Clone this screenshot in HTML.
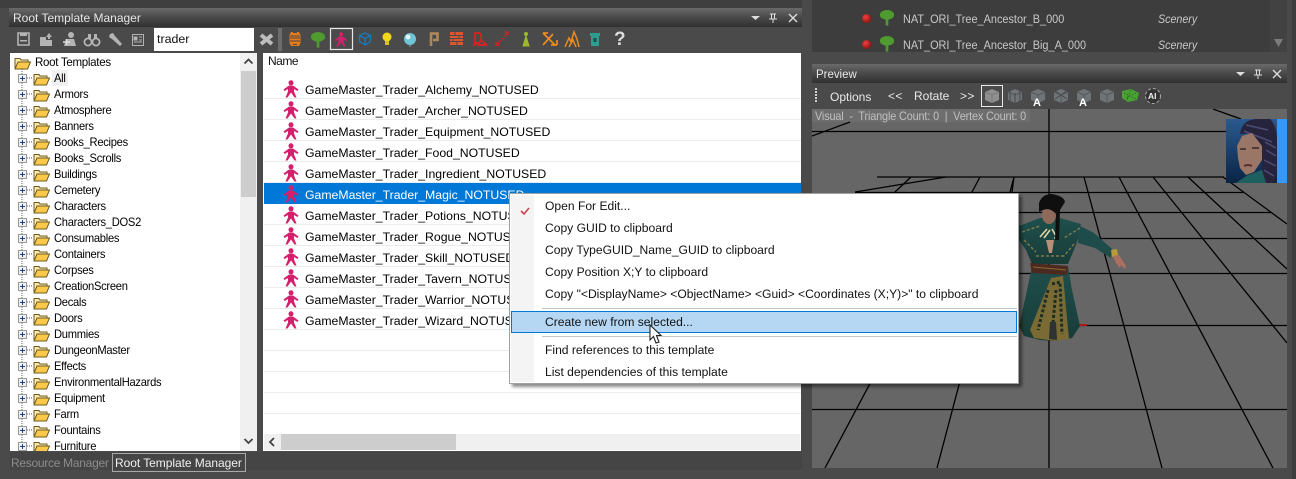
<!DOCTYPE html>
<html><head><meta charset="utf-8"><style>
html,body{margin:0;padding:0}
body{width:1296px;height:479px;overflow:hidden;background:#4a4a4a;position:relative;font:12px/16px "Liberation Sans",sans-serif;color:#000}
.a{position:absolute}
.s{position:absolute;white-space:pre;transform-origin:0 50%}
.tb{position:absolute;height:19px;background:linear-gradient(#6a6a6a,#4c4c4c 45%,#303030)}
.tree{position:absolute;left:54px;line-height:16px;font-size:12px;letter-spacing:-.3px;white-space:pre;transform:scaleX(.93);transform-origin:0 0}
.lst{position:absolute;left:305px;top:80px;line-height:21px;font-size:12.25px;white-space:pre}
.m{position:absolute;left:545px;white-space:pre;font-size:12.1px;line-height:16px;color:#111}
</style></head><body>
<svg width="0" height="0" style="position:absolute"><defs>
<symbol id="p" viewBox="0 0 18 18"><path d="M7 5.500H11L16.500 9.500L15.500 11L12 9L12 11.500L14.500 17.500H12.500L9 12.500L5.500 17.500H3.500L6 11.500L6 9L2.500 11L1.500 9.500Z" fill="#d3206c"/><circle cx="9" cy="2.800" r="2.500" fill="#d3206c"/></symbol>
<symbol id="f" viewBox="0 0 17 14"><path d="M1 12V2.500H6L7 4H14V6" fill="#fbe9a8" stroke="#6d5a22"/><path d="M1 13L4 6H16.500L13.500 13Z" fill="#fcc94a" stroke="#6d5a22"/></symbol>
<symbol id="b" viewBox="0 0 9 9"><rect x=".5" y=".5" width="8" height="8" fill="#f2f2f2" stroke="#9a9a9a"/><path d="M2 4.500H7M4.500 2V7" stroke="#1f3f8f"/></symbol>
<symbol id="tr" viewBox="0 0 18 18"><ellipse cx="9" cy="6" rx="8" ry="5.500" fill="#4f9b30"/><rect x="7.500" y="9" width="3" height="9" fill="#4f9b30"/></symbol>
<symbol id="cb" viewBox="0 0 18 18"><path d="M9 2L16 5V13L9 16L2 13V5Z" fill="#6f7477"/><path d="M2 5L9 8L16 5M9 8V16" stroke="#54585b" fill="none"/></symbol>
</defs></svg>

<!-- Top bars -->
<div class="a" style="left:0;top:0;width:802px;height:8px;background:#3f3f3f"></div>
<div class="tb" style="left:9px;top:8px;width:793px"></div>
<div class="s" style="left:13px;top:10px;color:#e6e6e6;font-size:12px">Root Template Manager</div>
<svg class="a" style="left:745px;top:8px" width="57" height="19" fill="none" stroke="#ddd"><path d="M6 8H15L10.500 12Z" fill="#ddd" stroke="none"/><path d="M25 6H31M26.500 6V11M29.500 6V11M24 11H32M28 11V15" /><path d="M44 6L52 14M52 6L44 14" stroke-width="1.400"/></svg>

<!-- left toolbar -->
<svg class="a" style="left:0;top:27px" width="154" height="25" fill="#b4b4b4">
<path d="M18 6H29V18H18Z" fill="none" stroke="#b4b4b4" stroke-width="1.600"/><rect x="20" y="6" width="7" height="3"/><rect x="20" y="13" width="7" height="1.500"/>
<path d="M40 10H46V13H52V19H40Z"/><path d="M46 10L49 6L52 10H50V12H48V10Z"/>
<circle cx="71" cy="8" r="3"/><path d="M64 19L66 12H74L76 19Z"/><path d="M63 15H70M66.500 12V18" stroke="#ddd" stroke-width="1.500"/>
<circle cx="88" cy="15" r="3.600" fill="none" stroke="#b4b4b4" stroke-width="1.800"/><circle cx="96" cy="15" r="3.600" fill="none" stroke="#b4b4b4" stroke-width="1.800"/><path d="M88 7H91V12H88ZM94 7H97V12H94Z"/>
<path d="M110 7L113 6L115 9L122 17L120 19L112 12L109 10Z"/>
<rect x="132.500" y="7.500" width="11" height="11" fill="none" stroke="#b4b4b4"/><path d="M134 10H137V13H134ZM139 10H142M139 13H142M134 15H142" stroke="#b4b4b4"/>
</svg>
<div class="a" style="left:154px;top:28px;width:100px;height:23px;background:#fff"></div>
<div class="s" style="left:157px;top:31px;font-size:12.4px;color:#111">trader</div>
<svg class="a" style="left:258px;top:32px" width="18" height="15"><path d="M3 3L14 12M14 3L3 12" stroke="#bdbdbd" stroke-width="4"/></svg>
<div class="a" style="left:278px;top:28px;width:4px;height:23px;background:#6c6c6c"></div>

<!-- filter toolbar -->
<svg class="a" style="left:285px;top:27px" width="350" height="25" fill="none">
<path d="M6 5H14L15.500 8V16L14 19H6L4.500 16V8Z" fill="#e87b18"/><path d="M5 9H15M5 11H15M5 14H15M8 5.500H12M8 17.500H12" stroke="#4a4a4a"/>
<use href="#tr" x="25" y="4" width="16" height="17"/>
<rect x="45.500" y="1.500" width="22" height="21" stroke="#e8e8e8" stroke-width="1.200"/>
<use href="#p" x="48" y="5" width="16" height="15"/>
<path d="M80 6L85.500 8.500V14.500L80 18L74.500 14.500V8.500ZM74.500 8.500L80 11.500L85.500 8.500M80 11.500V18" stroke="#1a7ab8" stroke-width="1.300"/>
<circle cx="102" cy="10" r="4.500" fill="#f0d81c"/><rect x="100" y="14" width="4" height="4" fill="#d8c218"/>
<circle cx="125" cy="12" r="6" fill="#6fc4d8"/><circle cx="123" cy="10" r="2.400" fill="#e4f7fb"/><path d="M125 18V20" stroke="#8aa"/>
<path d="M146 19V6.500H152.500V13H148" stroke="#b08a56" stroke-width="2.600"/>
<rect x="165" y="5" width="13" height="13" fill="#e2552a"/><path d="M165 8.500H178M165 11.500H178M165 14.500H178M170 5V8.500M174 8.500V11.500M168 11.500V14.500M172 14.500V18" stroke="#4a4a4a"/>
<path d="M190 6H194C197 6 197 14 194 16H190ZM190 6V16M188 19L192 16M202 18H192M202 18L197 14" stroke="#e02020" stroke-width="1.700"/>
<path d="M211 18.500H213.500V16H211ZM220.500 7.500H223V5H220.500Z" stroke="#d82020" stroke-width="1.300"/><path d="M214 15L217 12L219.500 11L220.500 8.500" stroke="#d82020" stroke-width="1.300" stroke-dasharray="2.500 1.500"/>
<circle cx="241" cy="7" r="2" fill="#9bbb2c"/><path d="M241 9L238 19H244Z" fill="#9bbb2c" stroke="#9bbb2c"/>
<path d="M258 6L270 18M258 18L268 7M258 6H263M266 18H272M272 18V13" stroke="#ef8a1c" stroke-width="1.700"/>
<path d="M280 20L284 11L286 15L289 5L292 12L294 20M284 20L288 13L291 20" stroke="#ef8a1c" stroke-width="1.500"/>
<path d="M305 6H315V9H314V19H306V9H305Z" fill="#2e9c8e"/><rect x="308.500" y="11" width="3" height="4" fill="#1f4d48"/>
</svg>
<div class="s" style="left:614px;top:28px;font:bold 19px/24px 'Liberation Sans',sans-serif;color:#dcdcdc">?</div>

<!-- tree panel -->
<div class="a" style="left:10px;top:53px;width:247px;height:398px;background:#fff;overflow:hidden">
<div class="a" style="left:230px;top:0;width:17px;height:398px;background:#f0f0f0"></div>
<div class="a" style="left:231px;top:18px;width:15px;height:126px;background:#cdcdcd"></div>
<svg class="a" style="left:230px;top:0" width="17" height="398" fill="none" stroke="#444" stroke-width="1.800"><path d="M4.500 10.500L8.500 6.500L12.500 10.500M4.500 386L8.500 390L12.500 386"/></svg>
<svg class="a" style="left:0;top:0" width="230" height="398">
<path d="M12 16V398" stroke="#666" stroke-dasharray="1 1"/>
<path d="M17 25H23M17 41H23M17 57H23M17 73H23M17 89H23M17 105H23M17 121H23M17 137H23M17 153H23M17 169H23M17 185H23M17 201H23M17 217H23M17 233H23M17 249H23M17 265H23M17 281H23M17 297H23M17 313H23M17 329H23M17 345H23M17 361H23M17 377H23M17 393H23" stroke="#666" stroke-dasharray="1 1"/>
<use href="#f" x="4" y="3" width="17" height="14"/>
<g id="r0"><use href="#b" x="8" y="21" width="9" height="9"/><use href="#f" x="23" y="19" width="17" height="14"/></g>
<use href="#b" x="8" y="37" width="9" height="9"/><use href="#f" x="23" y="35" width="17" height="14"/>
<use href="#b" x="8" y="53" width="9" height="9"/><use href="#f" x="23" y="51" width="17" height="14"/>
<use href="#b" x="8" y="69" width="9" height="9"/><use href="#f" x="23" y="67" width="17" height="14"/>
<use href="#b" x="8" y="85" width="9" height="9"/><use href="#f" x="23" y="83" width="17" height="14"/>
<use href="#b" x="8" y="101" width="9" height="9"/><use href="#f" x="23" y="99" width="17" height="14"/>
<use href="#b" x="8" y="117" width="9" height="9"/><use href="#f" x="23" y="115" width="17" height="14"/>
<use href="#b" x="8" y="133" width="9" height="9"/><use href="#f" x="23" y="131" width="17" height="14"/>
<use href="#b" x="8" y="149" width="9" height="9"/><use href="#f" x="23" y="147" width="17" height="14"/>
<use href="#b" x="8" y="165" width="9" height="9"/><use href="#f" x="23" y="163" width="17" height="14"/>
<use href="#b" x="8" y="181" width="9" height="9"/><use href="#f" x="23" y="179" width="17" height="14"/>
<use href="#b" x="8" y="197" width="9" height="9"/><use href="#f" x="23" y="195" width="17" height="14"/>
<use href="#b" x="8" y="213" width="9" height="9"/><use href="#f" x="23" y="211" width="17" height="14"/>
<use href="#b" x="8" y="229" width="9" height="9"/><use href="#f" x="23" y="227" width="17" height="14"/>
<use href="#b" x="8" y="245" width="9" height="9"/><use href="#f" x="23" y="243" width="17" height="14"/>
<use href="#b" x="8" y="261" width="9" height="9"/><use href="#f" x="23" y="259" width="17" height="14"/>
<use href="#b" x="8" y="277" width="9" height="9"/><use href="#f" x="23" y="275" width="17" height="14"/>
<use href="#b" x="8" y="293" width="9" height="9"/><use href="#f" x="23" y="291" width="17" height="14"/>
<use href="#b" x="8" y="309" width="9" height="9"/><use href="#f" x="23" y="307" width="17" height="14"/>
<use href="#b" x="8" y="325" width="9" height="9"/><use href="#f" x="23" y="323" width="17" height="14"/>
<use href="#b" x="8" y="341" width="9" height="9"/><use href="#f" x="23" y="339" width="17" height="14"/>
<use href="#b" x="8" y="357" width="9" height="9"/><use href="#f" x="23" y="355" width="17" height="14"/>
<use href="#b" x="8" y="373" width="9" height="9"/><use href="#f" x="23" y="371" width="17" height="14"/>
<use href="#b" x="8" y="389" width="9" height="9"/><use href="#f" x="23" y="387" width="17" height="14"/>
</svg>
<div class="a" style="left:42px;top:17px;width:16px;height:16px;background:#f0f0f0"></div>
</div>
<div class="s" style="left:35px;top:54px;letter-spacing:-.3px;transform:scaleX(.96)">Root Templates</div>
<div style="position:absolute;left:0;top:53px;width:240px;height:398px;overflow:hidden">
<div class="tree" style="top:17px">All
Armors
Atmosphere
Banners
Books_Recipes
Books_Scrolls
Buildings
Cemetery
Characters
Characters_DOS2
Consumables
Containers
Corpses
CreationScreen
Decals
Doors
Dummies
DungeonMaster
Effects
EnvironmentalHazards
Equipment
Farm
Fountains
Furniture</div></div>

<!-- list panel -->
<div class="a" style="left:263px;top:53px;width:538px;height:398px;background:#fff;overflow:hidden">
<svg class="a" style="left:0;top:0" width="538" height="380" stroke="#ececec"><path d="M1 45.500H538M1 66.500H538M1 87.500H538M1 108.500H538M1 129.500H538M1 171.500H538M1 192.500H538M1 213.500H538M1 234.500H538M1 255.500H538M1 276.500H538M1 297.500H538M1 318.500H538M1 339.500H538M1 360.500H538"/></svg>
<div class="a" style="left:1px;top:130px;width:537px;height:21px;background:#0078d7"></div>
<div class="a" style="left:1px;top:381px;width:536px;height:16px;background:#f0f0f0"></div>
<div class="a" style="left:18px;top:381px;width:175px;height:16px;background:#cdcdcd"></div>
<svg class="a" style="left:1px;top:381px" width="17" height="16" fill="none" stroke="#444" stroke-width="1.800"><path d="M10 4L6 8L10 12"/></svg>
</div>
<div class="s" style="left:268px;top:53px;font-size:12px;letter-spacing:-.5px;color:#111">Name</div>
<svg class="a" style="left:282px;top:80px" width="20" height="250">
<use href="#p" x="0" y="0" width="18" height="18"/><use href="#p" x="0" y="21" width="18" height="18"/><use href="#p" x="0" y="42" width="18" height="18"/><use href="#p" x="0" y="63" width="18" height="18"/><use href="#p" x="0" y="84" width="18" height="18"/><use href="#p" x="0" y="105" width="18" height="18"/><use href="#p" x="0" y="126" width="18" height="18"/><use href="#p" x="0" y="147" width="18" height="18"/><use href="#p" x="0" y="168" width="18" height="18"/><use href="#p" x="0" y="189" width="18" height="18"/><use href="#p" x="0" y="210" width="18" height="18"/><use href="#p" x="0" y="231" width="18" height="18"/>
</svg>
<div class="lst">GameMaster_Trader_Alchemy_NOTUSED
GameMaster_Trader_Archer_NOTUSED
GameMaster_Trader_Equipment_NOTUSED
GameMaster_Trader_Food_NOTUSED
GameMaster_Trader_Ingredient_NOTUSED
<span style="color:#fff">GameMaster_Trader_Magic_NOTUSED</span>
GameMaster_Trader_Potions_NOTUSED
GameMaster_Trader_Rogue_NOTUSED
GameMaster_Trader_Skill_NOTUSED
GameMaster_Trader_Tavern_NOTUSED
GameMaster_Trader_Warrior_NOTUSED
GameMaster_Trader_Wizard_NOTUSED</div>

<!-- tabs -->
<div class="a" style="left:10px;top:452px;width:792px;height:18px;background:#454545"></div>
<div class="s" style="left:11px;top:455px;color:#8c8c8c;font-size:12px;letter-spacing:-.28px">Resource Manager</div>
<div class="a" style="left:112px;top:453px;width:132px;height:17px;border:1px solid #a8a8a8"></div>
<div class="s" style="left:115px;top:455px;color:#f0f0f0;font-size:12px;letter-spacing:-.05px">Root Template Manager</div>

<!-- right top panel -->
<div class="a" style="left:812px;top:0;width:475px;height:52px;background:#3d3d3d"></div>
<div class="a" style="left:1270px;top:0;width:17px;height:52px;background:#424242"></div>
<svg class="a" style="left:860px;top:8px" width="40" height="44">
<defs><radialGradient id="rd" cx=".4" cy=".35" r=".7"><stop offset="0" stop-color="#f04040"/><stop offset="1" stop-color="#8c1010"/></radialGradient></defs>
<circle cx="6.500" cy="10.500" r="4.500" fill="url(#rd)"/><circle cx="6.500" cy="36.500" r="4.500" fill="url(#rd)"/>
<use href="#tr" x="19" y="1" width="16" height="17"/><use href="#tr" x="19" y="27" width="16" height="17"/></svg>
<div class="s" style="left:903px;top:11px;color:#c8c8c8;font-size:12.2px;transform:scaleX(.895)">NAT_ORI_Tree_Ancestor_B_000</div>
<div class="s" style="left:903px;top:37px;color:#c8c8c8;font-size:12.2px;transform:scaleX(.895)">NAT_ORI_Tree_Ancestor_Big_A_000</div>
<div class="s" style="left:1158px;top:11px;color:#c8c8c8;font-style:italic;transform:scaleX(.89)">Scenery</div>
<div class="s" style="left:1158px;top:37px;color:#c8c8c8;font-style:italic;transform:scaleX(.89)">Scenery</div>
<svg class="a" style="left:1273px;top:38px" width="12" height="10"><path d="M1 1H10L5.500 9Z" fill="#7c7c7c"/></svg>

<!-- Preview -->
<div class="tb" style="left:812px;top:64px;width:475px"></div>
<div class="s" style="left:816px;top:66px;color:#e6e6e6;font-size:12.2px;transform:scaleX(.94)">Preview</div>
<svg class="a" style="left:1230px;top:64px" width="57" height="19" fill="none" stroke="#ddd"><path d="M6 8H15L10.500 12Z" fill="#ddd" stroke="none"/><path d="M25 6H31M26.500 6V11M29.500 6V11M24 11H32M28 11V15"/><path d="M43 6L51 14M51 6L43 14" stroke-width="1.400"/></svg>
<svg class="a" style="left:814px;top:87px" width="6" height="18" fill="#cfcfcf"><rect x="1" y="1" width="2" height="2"/><rect x="1" y="4" width="2" height="2"/><rect x="1" y="7" width="2" height="2"/><rect x="1" y="10" width="2" height="2"/><rect x="1" y="13" width="2" height="2"/></svg>
<div class="s" style="left:830px;top:89px;color:#e8e8e8">Options</div>
<div class="s" style="left:888px;top:88px;color:#e8e8e8;letter-spacing:.4px">&lt;&lt;</div>
<div class="s" style="left:914px;top:88px;color:#e8e8e8">Rotate</div>
<div class="s" style="left:960px;top:88px;color:#e8e8e8;letter-spacing:.4px">&gt;&gt;</div>
<svg class="a" style="left:981px;top:85px" width="185" height="22" fill="none">
<rect x=".5" y=".5" width="21" height="21" stroke="#e8e8e8"/>
<path d="M11 4L18 7V15L11 18L4 15V7Z" fill="#8f8f8f"/><path d="M4 7L11 10L18 7M11 10V18" stroke="#7a7a7a"/>
<use href="#cb" x="25" y="2" width="18" height="18"/><path d="M29 6V17M34 8V19M39 6V17" stroke="#484848"/>
<use href="#cb" x="48" y="2" width="18" height="18"/>
<use href="#cb" x="71" y="2" width="18" height="18"/><path d="M74 6L86 14M86 6L74 14" stroke="#484848"/>
<use href="#cb" x="94" y="2" width="18" height="18"/>
<use href="#cb" x="117" y="2" width="18" height="18"/>
<path d="M141 6L150 4L158 8L156 15L147 17L141 13Z" fill="#49a233"/><path d="M143 8L155 14M150 5L146 15M155 8L145 13" stroke="#2f6a25" stroke-dasharray="1.500 1.500"/>
<circle cx="172" cy="11" r="7.500" fill="#333" stroke="#aaa" stroke-dasharray="3 2"/>
</svg>
<div class="s" style="left:1033px;top:97px;color:#fff;font:bold 11px/12px 'Liberation Sans',sans-serif">A</div>
<div class="s" style="left:1079px;top:97px;color:#fff;font:bold 11px/12px 'Liberation Sans',sans-serif">A</div>
<div class="s" style="left:1148px;top:91px;color:#eee;font:bold 8.500px/10px 'Liberation Sans',sans-serif">AI</div>

<!-- Viewport -->
<div class="a" style="left:1287px;top:0;width:5px;height:479px;background:#4a4a4a"></div>
<div class="a" style="left:1292px;top:0;width:4px;height:479px;background:#3d3d3d"></div>
<svg class="a" style="left:812px;top:109px" width="475" height="359" viewBox="812 109 475 359">
<defs>
<linearGradient id="robe" x1="0" x2="0" y1="0" y2="1"><stop offset="0" stop-color="#1f4f4c"/><stop offset="1" stop-color="#183c38"/></linearGradient>
<linearGradient id="bg1" x1="0" x2="0" y1="0" y2="1"><stop offset="0" stop-color="#2a5a90"/><stop offset="1" stop-color="#0a2446"/></linearGradient>
</defs>
<rect x="812" y="109" width="475" height="359" fill="#666"/>
<g stroke="#000" stroke-width="1.300" fill="none">
<path d="M1049 109V468"/>
<path d="M812 131.500H1287M877 177H1224M855 192.500H1243M812 212.500H1271M812 238.500H1287M812 273.500H1287M812 325.500H1287M812 409.500H1287" />
<path d="M1084 177L1162 468M1119 177L1273 468M1153 177L1287 343M1188 177L1287 269M1223 177L1287 224"/>
<path d="M1014 177L937 468M980 177L825 468M946 177L855 192M911 177L895 192M1014 177L1012 192"/>
<path d="M1213 109L1241 119"/>
</g>
<rect x="812" y="109" width="218" height="13" fill="#6e6e6e"/>
<path d="M812 136L850 122" stroke="#000" stroke-width="1.200"/>
<!-- character -->
<path d="M1080 325H1087" stroke="#b01818" stroke-width="2"/>
<path d="M1076 224L1094 233L1112 249L1111 258L1095 248L1078 243Z" fill="#1d4c4a"/>
<path d="M1019 226L1040 218H1060L1081 224L1076 245L1068 264H1032L1026 250L1019 240Z" fill="url(#robe)"/>
<path d="M1032 266H1068L1072 290L1080 326L1072 338L1056 341L1040 340L1024 336L1019 326L1026 295Z" fill="url(#robe)"/>
<path d="M1051 278L1063 276L1069 339L1056 341L1034 338L1030 330Z" fill="#7a6a34"/>
<path d="M1052 284L1060 282L1062 334M1048 290L1038 330M1056 290L1052 334" stroke="#1d2f24" stroke-width="3" stroke-dasharray="3 2" fill="none"/>
<path d="M1050 322L1056 322L1057 340L1049 339Z" fill="#2e3232"/>
<path d="M1030 263L1068 266L1067 275L1032 273Z" fill="#4c2a20"/>
<path d="M1033 267L1066 270" stroke="#8a6a34"/>
<path d="M1022 232L1040 226M1080 228L1064 238M1024 240L1036 252M1074 244L1064 256M1036 256H1064" stroke="#7f7a4c" stroke-width="1.500" stroke-dasharray="3 2" fill="none"/>
<path d="M1046 240H1054L1052 253H1049Z" fill="#b89078"/>
<path d="M1040 237L1047 229M1044 238L1050 230M1056 236L1052 229M1054 238H1058" stroke="#ddd6a8" stroke-width="1.600"/>
<ellipse cx="1049" cy="215" rx="7" ry="9" fill="#8f6a5a"/>
<path d="M1039 203Q1042 194 1052 194Q1064 196 1065 202L1060 210L1059 240L1055 240L1056 214Q1050 207 1043 210L1039 212Z" fill="#0f0f0f"/>
<path d="M1111 250L1117 249L1118 255L1112 257Z" fill="#b89a3a"/>
<path d="M1113 256L1119 255L1126 266L1125 269L1121 265L1120 268L1116 263Z" fill="#ad7060"/>
<!-- portrait -->
<rect x="1226" y="119" width="51" height="64" fill="url(#bg1)"/>
<rect x="1277" y="119" width="10" height="64" fill="#3399ff"/>
<path d="M1240 134Q1242 119 1258 119H1270Q1277 126 1277 140V170L1274 183H1262L1262 150L1252 133Z" fill="#26243c"/>
<path d="M1246 125L1268 130M1244 131L1272 142M1266 150L1276 156M1264 160L1276 166M1264 170L1274 176M1265 142L1276 148" stroke="#4c4c72" stroke-width="1.500" fill="none"/>
<path d="M1237 146L1242 136L1252 133L1262 146L1262 160L1254 172L1246 175L1240 168L1238 158Z" fill="#9a7666"/>
<path d="M1240 180L1248 175L1262 170L1266 183H1236Z" fill="#1e5f5f"/>
<path d="M1244 166Q1248 164 1252 166" stroke="#5a2c30" stroke-width="2" fill="none"/>
<path d="M1240 149H1246M1252 148H1259" stroke="#35282a" stroke-width="1.600"/>
</svg>
<div class="s" style="left:815px;top:108px;color:#c0c0c0;font-size:12px;letter-spacing:-.15px;transform:scaleX(.905)">Visual  -  Triangle Count: 0  |  Vertex Count: 0</div>

<!-- Context menu -->
<div class="a" style="left:509px;top:193px;width:508px;height:189px;background:#fff;border:1px solid #a0a0a0;box-shadow:3px 3px 3px rgba(0,0,0,.45)"></div>
<div class="a" style="left:511px;top:195px;width:23px;height:187px;background:#f4f4f4"></div>
<div class="a" style="left:542px;top:308px;width:475px;height:1px;background:#c4c4c4"></div>
<div class="a" style="left:542px;top:336px;width:475px;height:1px;background:#c4c4c4"></div>
<div class="a" style="left:511px;top:311px;width:504px;height:20px;background:#b5d7f3;border:1px solid #0078d7"></div>
<svg class="a" style="left:520px;top:206px" width="10" height="10" fill="none"><path d="M1 5L4 8L9 2" stroke="#d04050" stroke-width="1.600"/></svg>
<div class="m" style="top:198px">Open For Edit...</div>
<div class="m" style="top:220px">Copy GUID to clipboard</div>
<div class="m" style="top:242px">Copy TypeGUID_Name_GUID to clipboard</div>
<div class="m" style="top:264px">Copy Position X;Y to clipboard</div>
<div class="m" style="top:286px">Copy "&lt;DisplayName&gt; &lt;ObjectName&gt; &lt;Guid&gt; &lt;Coordinates (X;Y)&gt;" to clipboard</div>
<div class="m" style="top:314px">Create new from selected...</div>
<div class="m" style="top:342px">Find references to this template</div>
<div class="m" style="top:364px">List dependencies of this template</div>
<svg class="a" style="left:648px;top:324px" width="16" height="22"><path d="M2 1V16L5.500 12.500L8 19L11 18L8.500 11.500H13Z" fill="#fff" stroke="#222" stroke-width="1.100"/></svg>
</body></html>
